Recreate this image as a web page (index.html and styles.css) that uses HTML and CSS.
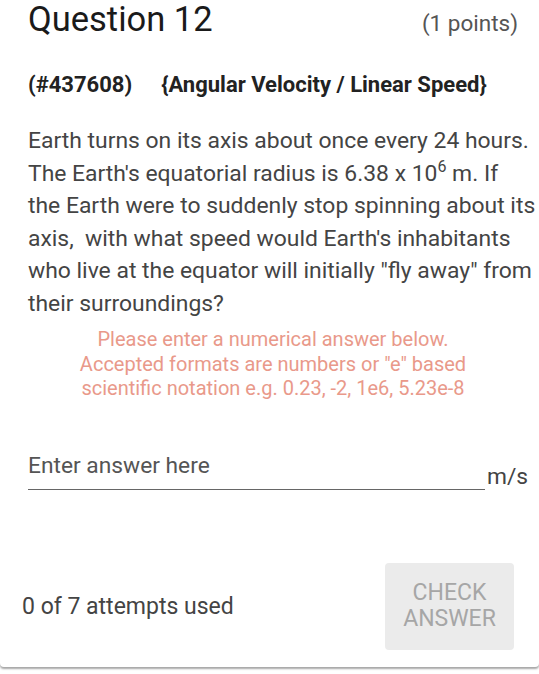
FILE: index.html
```html
<!DOCTYPE html>
<html>
<head>
<meta charset="utf-8">
<link rel="stylesheet" href="styles.css">
</head>
<body>
<div class="card">
  <div class="header">
    <h1 class="title">Question 12</h1>
    <span class="points">(1 points)</span>
  </div>
  <div class="meta">
    <span class="qid">(#437608)</span>
    <span class="topic">{Angular Velocity / Linear Speed}</span>
  </div>
  <p class="question">Earth turns on its axis about once every 24 hours.<br>The Earth's equatorial radius is 6.38 x 10<sup>6</sup> m. If<br>the Earth were to suddenly stop spinning about its<br>axis,&nbsp; with what speed would Earth's inhabitants<br>who live at the equator will initially "fly away" from<br>their surroundings?</p>
  <p class="hint">Please enter a numerical answer below.<br>Accepted formats are numbers or "e" based<br>scientific notation e.g. 0.23, -2, 1e6, 5.23e-8</p>
  <div class="answer-row">
    <div class="field"><span class="placeholder">Enter answer here</span></div>
    <span class="unit">m/s</span>
  </div>
  <div class="footer">
    <span class="attempts">0 of 7 attempts used</span>
    <button class="check">CHECK<br>ANSWER</button>
  </div>
</div>
</body>
</html>
```
FILE: styles.css
```css
html, body {
  margin: 0;
  padding: 0;
  background: #ffffff;
}
body {
  font-family: Roboto, "Liberation Sans", sans-serif;
  width: 539px;
  height: 674px;
  overflow: hidden;
}
.card {
  box-sizing: border-box;
  width: 539px;
  height: 667px;
  padding: 0 21px 0 28px;
  background: #fff;
  border-radius: 0 0 4px 4px;
  box-shadow: 0 2px 2px rgba(0,0,0,0.35);
  display: flex;
  flex-direction: column;
}
.header {
  display: flex;
  justify-content: space-between;
  align-items: baseline;
  height: 40px;
}
.title {
  margin: 0;
  font-weight: 400;
  font-size: 34.5px;
  line-height: 38px;
  color: #1a1a1a;
}
.points {
  font-size: 22.5px;
  color: #555;
}
.meta {
  margin-top: 30px;
  font-weight: 700;
  font-size: 22px;
  line-height: 30px;
  color: #222;
  display: flex;
  gap: 29px;
}
.question {
  margin: 25px -21px 0 0;
  font-size: 22.9px;
  line-height: 32.5px;
  color: #444;
  white-space: nowrap;
}
.question sup {
  font-size: 16px;
  line-height: 0;
  vertical-align: 9px;
}
.hint {
  margin: 7px 0 0 0;
  text-align: center;
  font-size: 20px;
  line-height: 24.5px;
  color: #e9998a;
}
.answer-row {
  margin-top: 50px;
  display: flex;
  align-items: flex-end;
}
.field {
  flex: 0 0 457px;
  height: 38px;
  border-bottom: 1.5px solid #666;
  display: flex;
  align-items: flex-start;
}
.placeholder {
  font-size: 22.75px;
  line-height: 30px;
  color: #555;
}
.unit {
  flex: none;
  margin-left: 2px;
  font-size: 22.75px;
  line-height: 26px;
  color: #444;
}
.footer {
  margin: 73px 0 0 -6px;
  display: flex;
  justify-content: space-between;
  align-items: center;
}
.attempts {
  font-size: 23px;
  color: #444;
}
.check {
  width: 129px;
  height: 87px;
  margin-right: 4px;
  border: none;
  border-radius: 4px;
  background: #ebebeb;
  font-family: Roboto, "Liberation Sans", sans-serif;
  font-size: 23px;
  line-height: 26px;
  color: #a6a6a6;
  padding: 0;
}
```
